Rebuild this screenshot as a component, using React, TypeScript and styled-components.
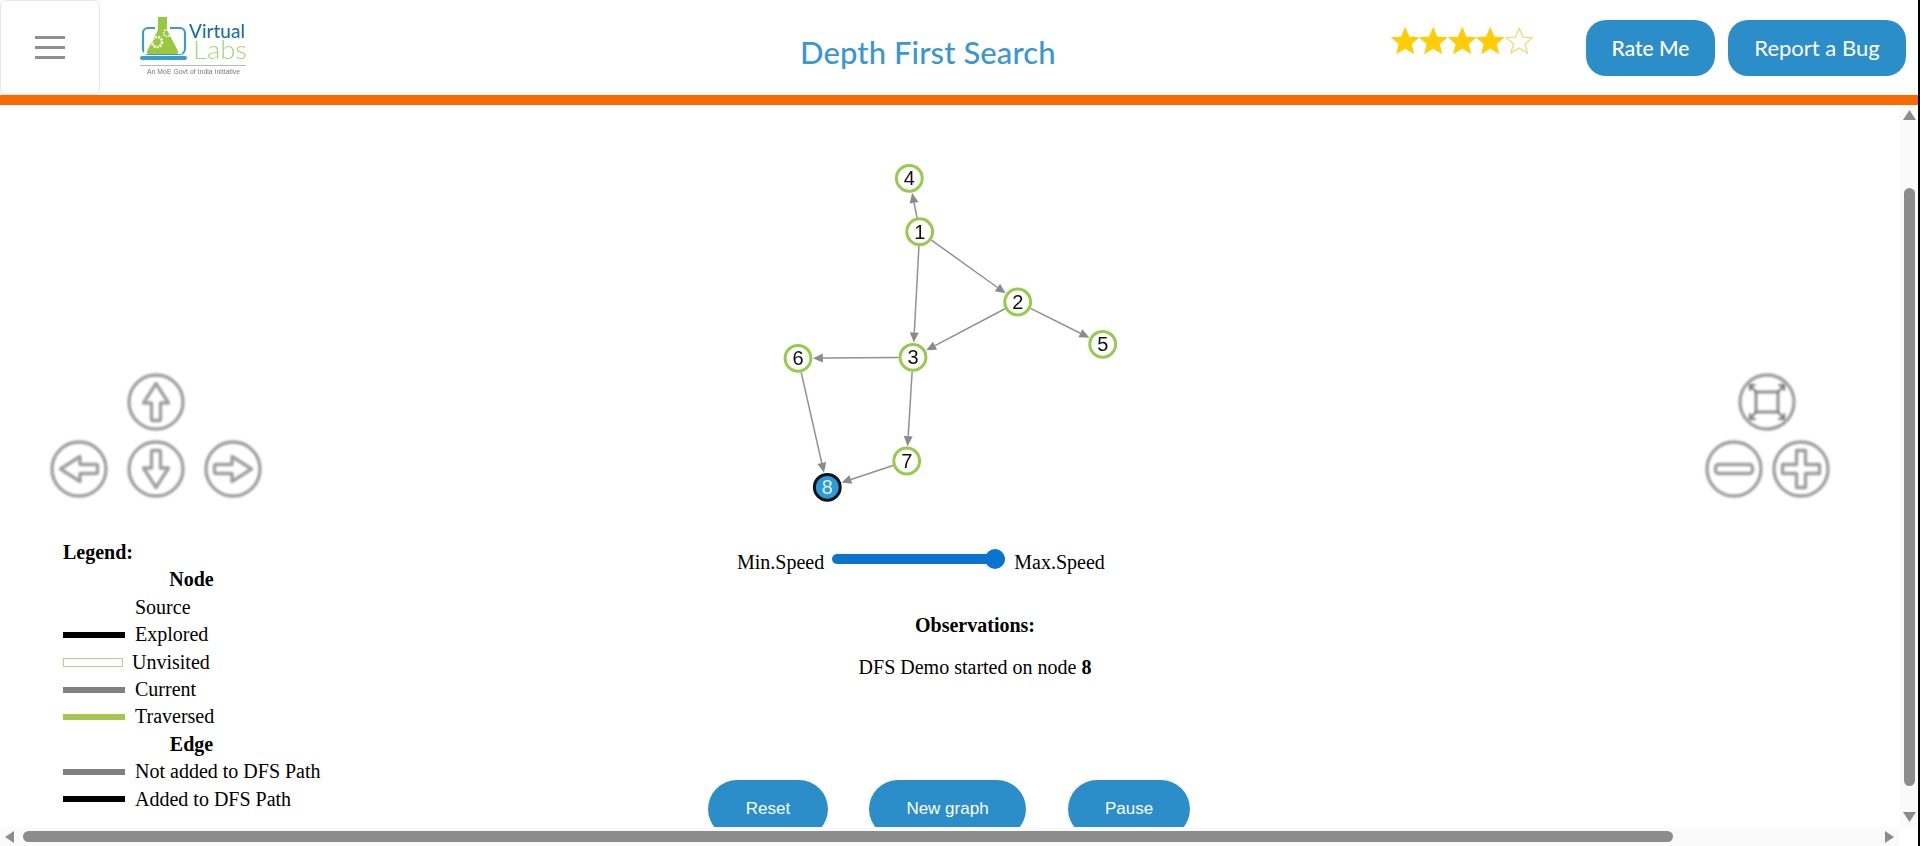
import React from 'react';
import styled, { createGlobalStyle } from 'styled-components';

const GlobalStyle = createGlobalStyle`
  html, body {
    margin: 0;
    padding: 0;
    height: 100%;
    overflow: hidden;
    background: #fff;
  }
  #root { height: 100%; }
`;

const Page = styled.div`
  display: flex;
  width: 1920px;
  height: 846px;
`;

const Frame = styled.div`
  flex: 1;
  display: flex;
  flex-direction: column;
  min-width: 0;
`;

const EdgeStrip = styled.div`
  width: 2px;
  background: #000;
`;

const Header = styled.header`
  display: flex;
  align-items: center;
  height: 95px;
  padding-right: 12px;
  font-family: Lato, 'Open Sans', sans-serif;
`;

const MenuButton = styled.button`
  display: flex;
  flex-direction: column;
  justify-content: center;
  align-items: center;
  gap: 7px;
  width: 100px;
  height: 95px;
  padding: 0;
  background: #fff;
  border: 1px solid #e8e8e8;
  border-radius: 6px;
`;

const MenuLine = styled.span`
  display: block;
  width: 30px;
  height: 3px;
  background: #8f8f8f;
`;

const LogoSvg = styled.svg`
  display: block;
  width: 110px;
  height: 75px;
  margin-left: 40px;
  margin-top: 6px;
  filter: blur(0.3px);
`;

const Title = styled.h1`
  margin: 8px 0 0 550px;
  font-size: 31px;
  font-weight: 500;
  letter-spacing: 0.1px;
  color: #3b98cd;
`;

const Stars = styled.div`
  display: flex;
  margin-left: auto;
  margin-right: 53px;
  margin-top: -14px;
`;

const HeadButton = styled.button<{ $light?: boolean }>`
  height: 56px;
  padding: 0;
  width: ${(props) => (props.$light ? '178px' : '129px')};
  margin-left: ${(props) => (props.$light ? '13px' : '0')};
  background: #2b8ec9;
  border: none;
  border-radius: 20px;
  color: #fff;
  font-family: Lato, 'Open Sans', sans-serif;
  font-size: ${(props) => (props.$light ? '22px' : '21px')};
  font-weight: ${(props) => (props.$light ? 400 : 500)};
`;

const OrangeBar = styled.div`
  height: 10px;
  background: #f96a00;
`;

const Body = styled.div`
  flex: 1;
  display: flex;
  min-height: 0;
`;

const Content = styled.main`
  flex: 1;
  display: grid;
  grid-template-columns: 690px 530px 1fr;
  align-items: start;
  overflow: hidden;
  font-family: 'Liberation Serif', 'Times New Roman', serif;
  font-size: 20px;
  line-height: 27.4px;
  color: #000;
`;

const LeftColumn = styled.section`
  padding: 268px 0 0 50px;
`;

const ArrowPad = styled.div`
  display: grid;
  grid-template-columns: repeat(3, 58px);
  grid-template-rows: 58px 58px;
  gap: 9px 19px;
`;

const PadSlot = styled.div<{ $col: number; $row: number }>`
  grid-column: ${(props) => props.$col};
  grid-row: ${(props) => props.$row};
`;

const RoundIcon = styled.svg`
  display: block;
  width: 58px;
  height: 58px;
  fill: none;
  stroke: #a0a0a0;
  stroke-width: 3.4;
  stroke-linejoin: round;
  stroke-linecap: round;
  filter: blur(0.9px);
`;

const Legend = styled.div`
  width: 257px;
  margin: 41px 0 0 13px;
`;

const LegendHeading = styled.div<{ $center?: boolean }>`
  font-weight: bold;
  text-align: ${(props) => (props.$center ? 'center' : 'left')};
`;

const LegendRow = styled.div`
  display: flex;
  align-items: center;
  height: 27.4px;
  white-space: nowrap;
`;

const Swatch = styled.span<{ $color?: string; $outline?: boolean }>`
  flex: none;
  box-sizing: border-box;
  width: ${(props) => (props.$outline ? '60px' : '62px')};
  height: ${(props) => (props.$outline ? '9px' : '6px')};
  margin-right: ${(props) => (props.$outline ? '9px' : '10px')};
  background: ${(props) => props.$color || 'transparent'};
  border: ${(props) => (props.$outline ? '1px solid #b5d184' : 'none')};
`;

const CenterColumn = styled.section`
  display: flex;
  flex-direction: column;
`;

const GraphSvg = styled.svg`
  display: block;
  width: 530px;
  height: 420px;
  filter: blur(0.3px);
`;

const SpeedRow = styled.div`
  display: flex;
  align-items: flex-start;
  margin-top: 24px;
  padding-left: 47px;
`;

const SpeedSlider = styled.input`
  appearance: none;
  width: 173px;
  height: 20px;
  margin: 0 9px 0 8px;
  background: transparent;

  &::-webkit-slider-runnable-track {
    height: 10px;
    background: #0a74cf;
    border-radius: 5px;
  }

  &::-webkit-slider-thumb {
    appearance: none;
    width: 20px;
    height: 20px;
    margin-top: -5px;
    background: #0a74cf;
    border-radius: 50%;
  }
`;

const Observations = styled.div`
  margin-top: 36px;
  padding-left: 40px;
  text-align: center;
`;

const ObservationLine = styled.p`
  margin: 0 0 14px;
`;

const Actions = styled.div`
  display: flex;
  margin-top: 85px;
  padding-left: 18px;
`;

const ActionButton = styled.button<{ $width: number; $gap: number }>`
  flex: none;
  width: ${(props) => props.$width}px;
  height: 58px;
  margin-right: ${(props) => props.$gap}px;
  padding: 0;
  background: #2b8ec9;
  border: none;
  border-radius: 29px;
  color: #fff;
  font-family: 'Liberation Sans', Arial, sans-serif;
  font-size: 17px;
`;

const RightColumn = styled.section`
  display: flex;
  flex-direction: column;
  gap: 9px;
  padding: 268px 0 0 485px;
`;

const FitRow = styled.div`
  padding-left: 33px;
`;

const ZoomRow = styled.div`
  display: flex;
  gap: 9px;
`;

const VScroll = styled.div`
  flex: none;
  display: flex;
  flex-direction: column;
  align-items: center;
  width: 18px;
  padding-top: 5px;
  background: #fafafa;
`;

const VThumb = styled.div`
  width: 11px;
  height: 598px;
  margin: 68px 0 26px;
  background: #8c8c8c;
  border-radius: 6px;
`;

const HScroll = styled.div`
  flex: none;
  display: flex;
  align-items: center;
  height: 19px;
  padding-right: 24px;
  background: linear-gradient(to right, #fafafa 1899px, #fff 1899px);
`;

const HThumb = styled.div`
  width: 1650px;
  height: 11px;
  margin: 0 auto 0 9px;
  background: #8c8c8c;
  border-radius: 6px;
`;

const Tri = styled.svg`
  display: block;
  flex: none;
  fill: #8c8c8c;
`;

const LeftTri = styled(Tri)`
  margin-left: 5px;
`;

const STAR = 'M14 1l3.6 8.6 9.2.7-7 6 2.2 9-8-4.9-8 4.9 2.2-9-7-6 9.2-.7z';

const Star = ({ filled }: { filled: boolean }) => (
  <svg width="28.4" height="28" viewBox="0 0 28 27">
    <path
      d={STAR}
      fill={filled ? '#ffcd05' : '#fff'}
      stroke={filled ? '#ffcd05' : '#f5d76a'}
      strokeWidth="1.2"
    />
  </svg>
);

const Logo = () => (
  <LogoSvg viewBox="0 0 110 75">
    <rect x="3" y="15" width="42" height="26" rx="5" fill="none" stroke="#3a9bd0" strokeWidth="2.2" />
    <rect x="0" y="43" width="47" height="4" rx="2" fill="#3a9bd0" />
    <path d="M15 3h15v14l12 24H3l12-24z" fill="#fff" />
    <path d="M18 4h9v13l11 21q1 3-2 3H9q-3 0-2-3l11-21z" fill="#98c83e" />
    <circle cx="17" cy="29" r="5" fill="none" stroke="#fff" strokeWidth="2.6" strokeDasharray="2 1" />
    <circle cx="27" cy="20" r="3.4" fill="none" stroke="#fff" strokeWidth="1.8" strokeDasharray="1.5 1" />
    <text x="49" y="25" fontFamily="Lato, sans-serif" fontSize="19" fontWeight="500" fill="#1e6f9f" textLength="56">Virtual</text>
    <text x="53" y="46" fontFamily="Lato, sans-serif" fontSize="25" fontWeight="300" fill="#a7d678" textLength="54" lengthAdjust="spacingAndGlyphs">Labs</text>
    <rect x="0" y="52" width="106" height="1" fill="#b9b9b9" />
    <text x="7" y="60.5" fontFamily="'Liberation Sans', sans-serif" fontSize="6.8" fill="#777" textLength="93">An MoE Govt of India Initiative</text>
  </LogoSvg>
);

const ARROW = 'M0 -18.5 L12.5 1 L4.5 1 L4.5 17 Q4.5 18.5 3 18.5 L-3 18.5 Q-4.5 18.5 -4.5 17 L-4.5 1 L-12.5 1 Z';

const ArrowIcon = ({ angle }: { angle: number }) => (
  <RoundIcon viewBox="-29 -29 58 58">
    <circle r="27" />
    <path d={ARROW} transform={`rotate(${angle})`} />
  </RoundIcon>
);

const FitIcon = () => (
  <RoundIcon viewBox="-29 -29 58 58">
    <circle r="27" />
    <rect x="-11" y="-10" width="22" height="20" stroke="#909090" strokeWidth="3" />
    <path
      d="M-11 -10L-17 -17M11 -10L17 -17M-11 10L-17 17M11 10L17 17M-17 -12V-17H-12M17 -12V-17H12M-17 12V17H-12M17 12V17H12"
      stroke="#808080"
      strokeWidth="2.2"
    />
  </RoundIcon>
);

const MinusIcon = () => (
  <RoundIcon viewBox="-29 -29 58 58">
    <circle r="27" />
    <rect x="-18.5" y="-4.5" width="37" height="9" rx="3" />
  </RoundIcon>
);

const PlusIcon = () => (
  <RoundIcon viewBox="-29 -29 58 58">
    <circle r="27" />
    <path d="M-4.5 -18.5H4.5V-4.5H18.5V4.5H4.5V18.5H-4.5V4.5H-18.5V-4.5H-4.5Z" />
  </RoundIcon>
);

// node positions in page pixels, the svg viewBox matches them
const nodes: Record<string, [number, number]> = {
  '1': [919.7, 231.7],
  '2': [1017.7, 302],
  '3': [913, 357.3],
  '4': [909.3, 178.3],
  '5': [1102.7, 344.3],
  '6': [798, 358.3],
  '7': [906.7, 461],
  '8': [827.3, 487.3],
};

const edges = [
  ['1', '4'],
  ['1', '2'],
  ['1', '3'],
  ['2', '3'],
  ['2', '5'],
  ['3', '6'],
  ['3', '7'],
  ['6', '8'],
  ['7', '8'],
];

const NODE_R = 14.4;

const Edge = ({ from, to }: { from: string; to: string }) => {
  const [x1, y1] = nodes[from];
  const [x2, y2] = nodes[to];
  const len = Math.hypot(x2 - x1, y2 - y1);
  const ux = (x2 - x1) / len;
  const uy = (y2 - y1) / len;
  const tipX = x2 - ux * (NODE_R + 0.5);
  const tipY = y2 - uy * (NODE_R + 0.5);
  const baseX = tipX - ux * 10;
  const baseY = tipY - uy * 10;
  return (
    <g>
      <line
        x1={x1 + ux * NODE_R}
        y1={y1 + uy * NODE_R}
        x2={baseX}
        y2={baseY}
        stroke="#919191"
        strokeWidth="1.5"
      />
      <polygon
        points={`${tipX},${tipY} ${baseX - uy * 4.5},${baseY + ux * 4.5} ${baseX + uy * 4.5},${baseY - ux * 4.5}`}
        fill="#8b8b8b"
      />
    </g>
  );
};

const Graph = () => (
  <GraphSvg viewBox="690 105 530 420">
    {edges.map(([from, to]) => (
      <Edge key={from + to} from={from} to={to} />
    ))}
    {Object.entries(nodes).map(([id, [x, y]]) => (
      <g key={id}>
        <circle
          cx={x}
          cy={y}
          r="12.9"
          fill={id === '8' ? '#2e9bd6' : '#fff'}
          stroke={id === '8' ? '#0c1418' : '#97cb4d'}
          strokeWidth="3"
        />
        <text
          x={x}
          y={y + 7}
          textAnchor="middle"
          fontFamily="'Liberation Sans', Arial, sans-serif"
          fontSize="20"
          fill={id === '8' ? '#dff3ff' : '#111'}
        >
          {id}
        </text>
      </g>
    ))}
  </GraphSvg>
);

const legendNodes = [
  { label: 'Source' },
  { label: 'Explored', color: '#000' },
  { label: 'Unvisited', outline: true },
  { label: 'Current', color: '#808080' },
  { label: 'Traversed', color: '#a4c64f' },
];

const legendEdges = [
  { label: 'Not added to DFS Path', color: '#808080' },
  { label: 'Added to DFS Path', color: '#000' },
];

export default function App() {
  return (
    <Page>
      <GlobalStyle />
      <Frame>
        <Header>
          <MenuButton aria-label="Menu">
            <MenuLine />
            <MenuLine />
            <MenuLine />
          </MenuButton>
          <Logo />
          <Title>Depth First Search</Title>
          <Stars>
            {[1, 2, 3, 4, 5].map((n) => (
              <Star key={n} filled={n < 5} />
            ))}
          </Stars>
          <HeadButton>Rate Me</HeadButton>
          <HeadButton $light>Report a Bug</HeadButton>
        </Header>
        <OrangeBar />
        <Body>
          <Content>
            <LeftColumn>
              <ArrowPad>
                <PadSlot $col={2} $row={1}><ArrowIcon angle={0} /></PadSlot>
                <PadSlot $col={1} $row={2}><ArrowIcon angle={-90} /></PadSlot>
                <PadSlot $col={2} $row={2}><ArrowIcon angle={180} /></PadSlot>
                <PadSlot $col={3} $row={2}><ArrowIcon angle={90} /></PadSlot>
              </ArrowPad>
              <Legend>
                <LegendHeading>Legend:</LegendHeading>
                <LegendHeading $center>Node</LegendHeading>
                {legendNodes.map((row) => (
                  <LegendRow key={row.label}>
                    <Swatch $color={row.color} $outline={row.outline} />
                    {row.label}
                  </LegendRow>
                ))}
                <LegendHeading $center>Edge</LegendHeading>
                {legendEdges.map((row) => (
                  <LegendRow key={row.label}>
                    <Swatch $color={row.color} />
                    {row.label}
                  </LegendRow>
                ))}
              </Legend>
            </LeftColumn>
            <CenterColumn>
              <Graph />
              <SpeedRow>
                Min.Speed
                <SpeedSlider type="range" min={0} max={100} defaultValue={100} />
                Max.Speed
              </SpeedRow>
              <Observations>
                <ObservationLine><b>Observations:</b></ObservationLine>
                <ObservationLine>DFS Demo started on node <b>8</b></ObservationLine>
              </Observations>
              <Actions>
                <ActionButton $width={120} $gap={41}>Reset</ActionButton>
                <ActionButton $width={157} $gap={42}>New graph</ActionButton>
                <ActionButton $width={122} $gap={0}>Pause</ActionButton>
              </Actions>
            </CenterColumn>
            <RightColumn>
              <FitRow><FitIcon /></FitRow>
              <ZoomRow>
                <MinusIcon />
                <PlusIcon />
              </ZoomRow>
            </RightColumn>
          </Content>
          <VScroll>
            <Tri width="13" height="10" viewBox="0 0 13 10"><path d="M6.5 0L13 10H0z" /></Tri>
            <VThumb />
            <Tri width="13" height="10" viewBox="0 0 13 10"><path d="M0 0H13L6.5 10z" /></Tri>
          </VScroll>
        </Body>
        <HScroll>
          <LeftTri width="9" height="12" viewBox="0 0 9 12"><path d="M9 0V12L0 6z" /></LeftTri>
          <HThumb />
          <Tri width="9" height="12" viewBox="0 0 9 12"><path d="M0 0L9 6L0 12z" /></Tri>
        </HScroll>
      </Frame>
      <EdgeStrip />
    </Page>
  );
}
